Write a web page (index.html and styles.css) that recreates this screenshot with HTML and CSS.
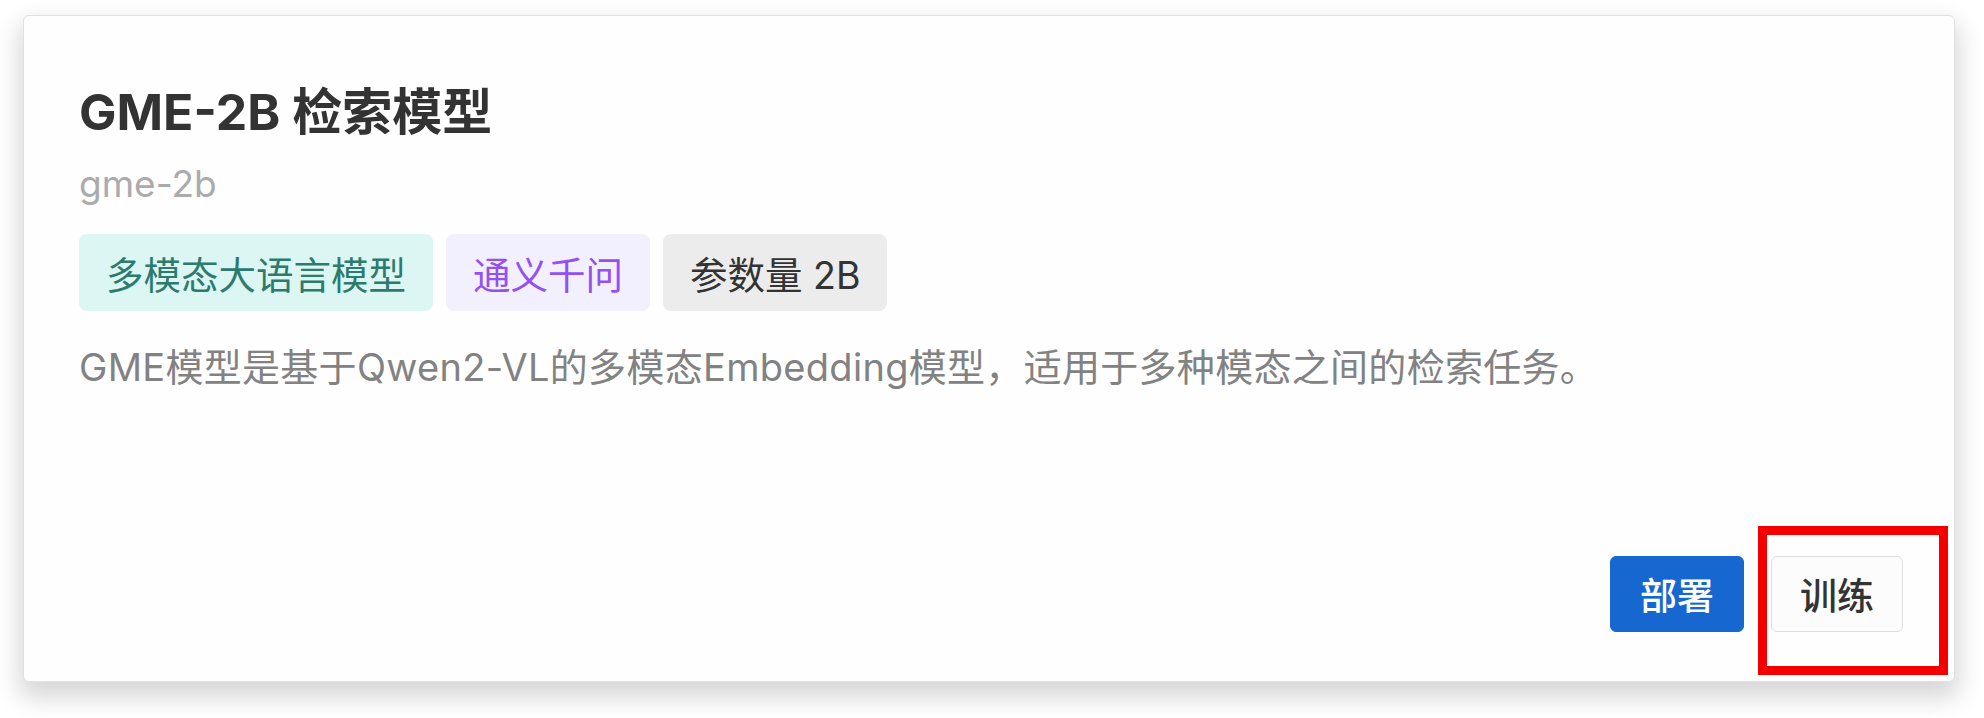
FILE: index.html
```html
<!DOCTYPE html>
<html lang="zh-CN">
<head>
<meta charset="UTF-8">
<title>GME-2B 检索模型</title>
<link rel="stylesheet" href="styles.css">
</head>
<body>
	<div class="model-card">
		<h1 class="model-title">GME-2B 检索模型</h1>
		<div class="model-id">gme-2b</div>

		<div class="tag-list">
			<span class="tag tag-teal">多模态大语言模型</span>
			<span class="tag tag-purple">通义千问</span>
			<span class="tag tag-gray">参数量 2B</span>
		</div>

		<p class="model-desc">GME模型是基于Qwen2-VL的多模态Embedding模型，适用于多种模态之间的检索任务。</p>

		<div class="card-actions">
			<button class="btn btn-primary" type="button">部署</button>
			<span class="highlight-wrap">
				<button class="btn btn-default" type="button">训练</button>
				<span class="highlight-box"></span>
			</span>
		</div>
	</div>
</body>
</html>
```

FILE: styles.css
```css
html, body {
	margin: 0;
	background-color: #fff;
}

body {
	min-height: 718px;
	box-sizing: border-box;
	padding: 15px 29px 0 23px;
	font-family: Inter, "Noto Sans CJK SC", sans-serif;
}

.model-card {
	box-sizing: border-box;
	height: 667px;
	padding: 66px 51px 49px 55px;
	display: flex;
	flex-direction: column;
	background-color: #fefefe;
	border: 1px solid #e0e0e0;
	border-radius: 6px;
	box-shadow: 0 12px 24px 4px rgba(0, 0, 0, 0.16);
}

.model-title {
	margin: 0;
	font-size: 50px;
	line-height: 60px;
	font-weight: 700;
	color: #333;
}

.model-id {
	margin-top: 20px;
	font-size: 37px;
	line-height: 44px;
	color: #ababab;
}

.tag-list {
	display: flex;
	gap: 13px;
	margin-top: 28px;
}

.tag {
	display: flex;
	align-items: center;
	height: 77px;
	padding: 0 27px;
	border-radius: 8px;
	font-size: 37.5px;
}

.tag-teal {
	background-color: #dcf6f4;
	color: #2c7b6d;
}

.tag-purple {
	background-color: #f2f0ff;
	color: #9450f0;
}

.tag-gray {
	background-color: #ececec;
	color: #333;
}

.model-desc {
	margin: 32px 0 0;
	font-size: 38px;
	line-height: 48px;
	letter-spacing: 0.3px;
	color: #828282;
}

.card-actions {
	margin-top: auto;
	display: flex;
	justify-content: flex-end;
	gap: 27px;
}

.btn {
	box-sizing: border-box;
	height: 76px;
	padding: 0;
	white-space: nowrap;
	font-family: inherit;
	font-size: 37px;
	font-weight: 500;
	border-radius: 6px;
	cursor: pointer;
}

.btn-primary {
	width: 134px;
	background-color: #1767d0;
	border: 1px solid #1767d0;
	color: #fff;
}

.btn-default {
	width: 132px;
	background-color: #fcfcfc;
	border: 1px solid #dedede;
	color: #333;
}

.highlight-wrap {
	position: relative;
	display: flex;
}

/* red annotation frame around the train button */
.highlight-box {
	position: absolute;
	left: -13px;
	top: -30px;
	right: -45px;
	bottom: -43px;
	border: 9px solid #f50000;
	pointer-events: none;
}
```
